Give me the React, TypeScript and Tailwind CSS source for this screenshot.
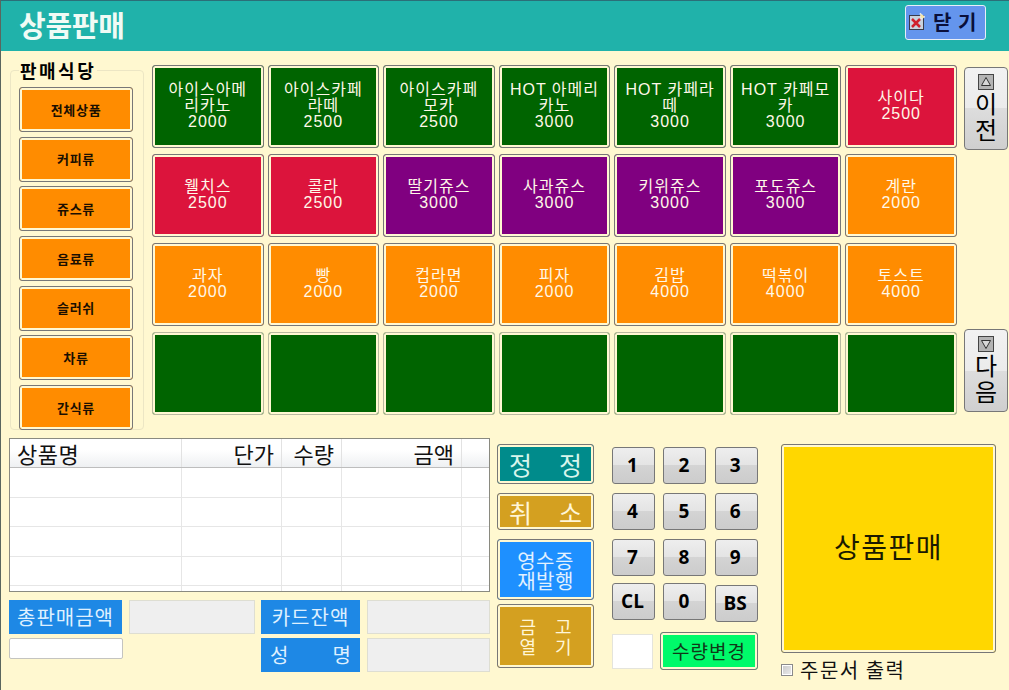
import React from "react";

const KR = '"Noto Sans CJK KR", "Noto Sans", sans-serif';
const MIX = '"Liberation Sans", "Noto Sans CJK KR", sans-serif';

const GREEN = "bg-[#006400]";
const RED = "bg-[#dc143c]";
const PURPLE = "bg-[#800080]";
const ORANGE = "bg-[#ff8c00]";

const products: { name: string[]; price?: string; bg: string }[] = [
  { name: ["아이스아메", "리카노"], price: "2000", bg: GREEN },
  { name: ["아이스카페", "라떼"], price: "2500", bg: GREEN },
  { name: ["아이스카페", "모카"], price: "2500", bg: GREEN },
  { name: ["HOT 아메리", "카노"], price: "3000", bg: GREEN },
  { name: ["HOT 카페라", "떼"], price: "3000", bg: GREEN },
  { name: ["HOT 카페모", "카"], price: "3000", bg: GREEN },
  { name: ["사이다"], price: "2500", bg: RED },
  { name: ["웰치스"], price: "2500", bg: RED },
  { name: ["콜라"], price: "2500", bg: RED },
  { name: ["딸기쥬스"], price: "3000", bg: PURPLE },
  { name: ["사과쥬스"], price: "3000", bg: PURPLE },
  { name: ["키위쥬스"], price: "3000", bg: PURPLE },
  { name: ["포도쥬스"], price: "3000", bg: PURPLE },
  { name: ["계란"], price: "2000", bg: ORANGE },
  { name: ["과자"], price: "2000", bg: ORANGE },
  { name: ["빵"], price: "2000", bg: ORANGE },
  { name: ["컵라면"], price: "2000", bg: ORANGE },
  { name: ["피자"], price: "2000", bg: ORANGE },
  { name: ["김밥"], price: "4000", bg: ORANGE },
  { name: ["떡볶이"], price: "4000", bg: ORANGE },
  { name: ["토스트"], price: "4000", bg: ORANGE },
  { name: [], bg: GREEN },
  { name: [], bg: GREEN },
  { name: [], bg: GREEN },
  { name: [], bg: GREEN },
  { name: [], bg: GREEN },
  { name: [], bg: GREEN },
  { name: [], bg: GREEN },
];

const cats = ["전체상품", "커피류", "쥬스류", "음료류", "슬러쉬", "차류", "간식류"];
const cols = [
  { t: "상품명", w: "w-[172px]", a: "text-left pl-[7px] tracking-[0.5px]" },
  { t: "단가", w: "w-[100px]", a: "text-right pr-[7px]" },
  { t: "수량", w: "w-[60px]", a: "text-right pr-[7px]" },
  { t: "금액", w: "w-[120px]", a: "text-right pr-[7px]" },
  { t: "", w: "flex-1", a: "" },
];

function Tri({ down }: { down?: boolean }) {
  return (
    <svg width="16" height="16" viewBox="0 0 16 16" className="shrink-0">
      <rect x="0.5" y="0.5" width="15" height="15" fill="#b4b4b4" stroke="#444" />
      <path d={down ? "M3.5 4.5H12.5L8 12.5Z" : "M8 3.5L12.5 11.5H3.5Z"} fill="#d8d8d8" stroke="#333" />
    </svg>
  );
}

function PagerBtn({ text, down }: { text: string[]; down?: boolean }) {
  return (
    <button className="w-[44px] h-[83px] rounded-[4px] border border-[#777] bg-[linear-gradient(#f2f2f2_0%,#ebebeb_50%,#dddddd_50%,#cfcfcf_100%)] flex flex-col items-center pt-[6px] text-black text-[24px] leading-[26px]">
      <Tri down={down} />
      {text.map((t) => (
        <span key={t}>{t}</span>
      ))}
    </button>
  );
}

function Key({ k, up }: { k: string; up?: boolean }) {
  return (
    <button
      className={`w-[43px] h-[37px] rounded-[3px] border border-[#777] bg-[linear-gradient(#eeeeee_0%,#e4e4e4_48%,#d4d4d4_48%,#cccccc_100%)] text-[19px] font-bold text-black pr-[2px] ${up ? "-mt-[2px]" : ""}`}
      style={{ fontFamily: '"Open Sans", sans-serif' }}
    >
      {k}
    </button>
  );
}

function Action({ h, bg, c, children }: { h: string; bg: string; c: string; children: React.ReactNode }) {
  return (
    <button className={`w-[97px] ${h} ${bg} ${c} rounded-[3px] border border-[#777] shadow-[inset_0_0_0_2px_#fff8d2] flex flex-col items-center justify-center`}>
      {children}
    </button>
  );
}

export default function App() {
  return (
    <div className="w-[1009px] h-[690px] bg-[#fff8d0] border-l border-l-[#5a665e] flex flex-col overflow-hidden" style={{ fontFamily: KR }}>
      <header className="h-[51px] bg-[#20b2aa] border-t border-t-[#2b6f78] flex items-center justify-between pl-[18px] pr-[23px] shrink-0">
        <h1 className="text-[29px] font-bold text-[#f0fbf5] leading-none -mt-[3px] tracking-[-0.3px]">상품판매</h1>
        <button className="w-[81px] h-[35px] -mt-[8px] bg-[#6495ed] border border-[#e8eef8] rounded-[3px] flex items-center pl-[2px] text-[#0a0f3a] text-[20px] font-bold">
          <svg width="18" height="20" viewBox="0 0 18 20" className="shrink-0">
            <rect x="1.5" y="3.5" width="14" height="14" fill="#c9d2df" stroke="#3a3a4a" />
            <path d="M4 7L12 15M12 7L4 15" stroke="#d0202c" strokeWidth="2.5" />
            <path d="M12 1L17 5L13 7Z" fill="#f7e6a0" stroke="#fff" strokeWidth="0.5" />
          </svg>
          <span className="ml-[7px] tracking-[1px]">닫 기</span>
        </button>
      </header>

      <div className="h-[387px] flex shrink-0 items-start">
        <fieldset className="ml-[9px] mt-[9px] w-[134px] h-[370px] border border-[#ece6c4] rounded-[4px] px-[8px]">
          <legend className="ml-0 px-[1px] h-[20px] text-[18px] leading-[20px] font-bold text-black tracking-[2.5px]">판매식당</legend>
          <div className="flex flex-col gap-[4.67px] pt-[7px]">
            {cats.map((c) => (
              <button key={c} className="w-[114px] h-[45px] bg-[#ff8c00] border border-[#777] rounded-[3px] shadow-[inset_0_0_0_2px_#fff8d2] text-[13px] font-bold text-[#1a0f00] tracking-[0.7px]">
                {c}
              </button>
            ))}
          </div>
        </fieldset>

        <div className="ml-[8px] mt-[14px] w-[805px] grid grid-cols-7 gap-x-[4px] gap-y-[6px] auto-rows-[83px]">
          {products.map((p, i) => (
            <button
              key={i}
              className={`${p.bg} text-[#fff8e8] text-[16px] leading-[16px] tracking-[1px] pb-[2px] rounded-[3px] border ${i >= 21 ? "border-[#b9b9a0]" : "border-[#777]"} shadow-[inset_0_0_0_2px_#fff8d2] text-center`}
              style={{ fontFamily: MIX }}
            >
              {p.name.map((l, j) => (
                <React.Fragment key={j}>
                  {l}
                  <br />
                </React.Fragment>
              ))}
              {p.price}
            </button>
          ))}
        </div>

        <div className="ml-[7px] mt-[16px] flex flex-col gap-[179px]">
          <PagerBtn text={["이", "전"]} />
          <PagerBtn text={["다", "음"]} down />
        </div>
      </div>

      <div className="flex-1 flex items-start">
        <div className="ml-[8px] w-[481px]">
          <div className="h-[154px] border border-[#8a8a80] bg-white flex flex-col overflow-hidden">
            <div className="h-[29px] shrink-0 flex border-b border-[#bdbdbd] bg-[linear-gradient(#ffffff_0%,#ffffff_40%,#eef0f2_100%)] text-[22px] leading-[29px] text-[#111]">
              {cols.map((c, i) => (
                <div key={i} className={`${c.w} ${c.a} border-r border-[#e2e2e2] last:border-r-0`}>
                  {c.t}
                </div>
              ))}
            </div>
            {[0, 1, 2, 3, 4].map((r) => (
              <div key={r} className="h-[29.5px] shrink-0 flex border-b border-[#e6e6e6]">
                {cols.map((c, i) => (
                  <div key={i} className={`${c.w} border-r border-[#e6e6e6] last:border-r-0`} />
                ))}
              </div>
            ))}
          </div>

          <div className="mt-[8px] flex items-start">
            <div className="w-[113px]">
              <div className="h-[34px] bg-[#1e88e5] text-[#dff0ff] text-[20px] flex items-center justify-center tracking-[1px]">총판매금액</div>
              <div className="mt-[4px] w-[114px] h-[21px] bg-white border border-[#c4c4c0] rounded-[2px]" />
            </div>
            <div className="ml-[7px] w-[126px] h-[34px] bg-[#efefef] border border-[#deded2]" />
            <div className="ml-[6px] w-[99px] flex flex-col gap-[4px]">
              <div className="h-[34px] bg-[#1e88e5] text-[#dff0ff] text-[20px] flex items-center justify-center tracking-[1px]">카드잔액</div>
              <div className="h-[34px] bg-[#1e88e5] text-[#dff0ff] text-[20px] flex items-center justify-between px-[9px]">
                <span>성</span>
                <span>명</span>
              </div>
            </div>
            <div className="ml-[7px] w-[123px] flex flex-col gap-[4px]">
              <div className="h-[34px] bg-[#efefef] border border-[#deded2]" />
              <div className="h-[34px] bg-[#efefef] border border-[#deded2]" />
            </div>
          </div>
        </div>

        <div className="ml-[7px] mt-[6px] flex flex-col">
          <Action h="h-[40px]" bg="bg-[#008b8b]" c="text-[#d8f5ec]">
            <span className="flex w-full justify-between px-[11px] text-[25px] leading-[30px]"><span>정</span><span>정</span></span>
          </Action>
          <div className="h-[9px]" />
          <Action h="h-[37px]" bg="bg-[#d4a020]" c="text-[#fff6d8]">
            <span className="flex w-full justify-between px-[11px] text-[25px] leading-[30px]"><span>취</span><span>소</span></span>
          </Action>
          <div className="h-[9px]" />
          <Action h="h-[61px]" bg="bg-[#1e90ff]" c="text-[#e2f1ff]">
            <span className="text-[20px] leading-[20px] tracking-[0.5px] pt-[2px]">
              영수증
              <br />
              재발행
            </span>
          </Action>
          <div className="h-[4px]" />
          <Action h="h-[64px]" bg="bg-[#d4a020]" c="text-[#fff6d8]">
            <span className="flex w-[52px] justify-between text-[18px] leading-[20px]"><span>금</span><span>고</span></span>
            <span className="flex w-[52px] justify-between text-[18px] leading-[20px]"><span>열</span><span>기</span></span>
          </Action>
        </div>

        <div className="ml-[18px] mt-[9px] w-[146px]">
          <div className="grid grid-cols-3 gap-x-[8px] gap-y-[9px]">
            {["1", "2", "3", "4", "5", "6", "7", "8", "9"].map((k) => (
              <Key key={k} k={k} />
            ))}
            <Key k="CL" up />
            <Key k="0" up />
            <Key k="BS" />
          </div>
          <div className="mt-[10px] flex items-center">
            <div className="w-[41px] h-[35px] bg-white border border-[#e4e4dc]" />
            <button className="ml-[7px] w-[98px] h-[38px] bg-[#00fa6a] text-[#103818] text-[19px] tracking-[1px] rounded-[3px] border border-[#777] shadow-[inset_0_0_0_2px_#fff8d2]">
              수량변경
            </button>
          </div>
        </div>

        <div className="ml-[23px] mt-[6px] w-[215px]">
          <button className="w-full h-[209px] pb-[5px] bg-[#ffd700] rounded-[3px] border border-[#777] shadow-[inset_0_0_0_2px_#fff8d2] text-[28px] text-[#1a1a00] tracking-[1.5px]">
            상품판매
          </button>
          <label className="mt-[5px] flex items-center">
            <span className="w-[12px] h-[12px] border border-[#8a8a8a] bg-[linear-gradient(135deg,#c8c8c8,#eeeeee)] shadow-[inset_0_0_0_1px_#fff]" />
            <span className="ml-[7px] text-[20px] leading-[24px] text-[#111] tracking-[1.5px]">주문서 출력</span>
          </label>
        </div>
      </div>
    </div>
  );
}
